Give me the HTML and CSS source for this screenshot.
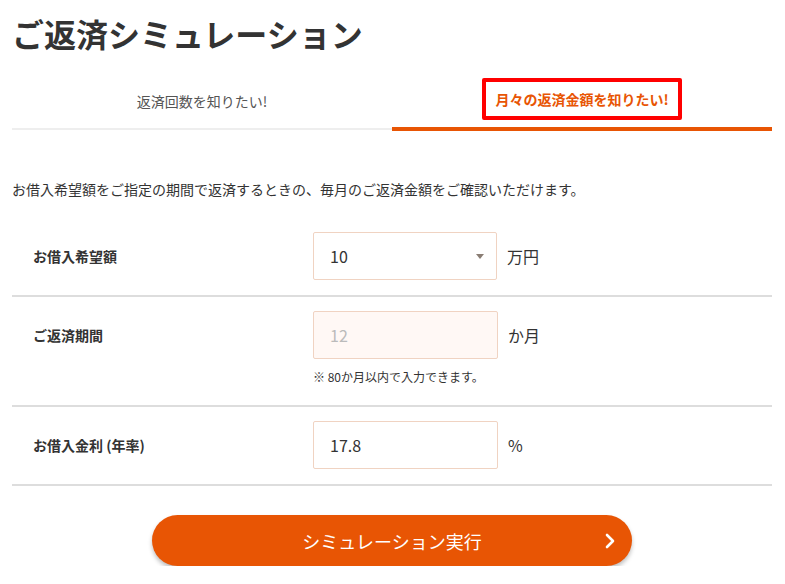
FILE: index.html
```html
<!DOCTYPE html>
<html lang="ja">
<head>
    <meta charset="UTF-8">
    <meta name="viewport" content="width=device-width, initial-scale=1.0">
    <title>ご返済シミュレーション</title>
    <link rel="stylesheet" href="styles.css">
</head>
<body>

    <section class="sim">
        <h1 class="sim-title">ご返済シミュレーション</h1>

        <ul class="tabs">
            <li class="tab">返済回数を知りたい!</li>
            <li class="tab current"><span class="tab-mark">月々の返済金額を知りたい!</span></li>
        </ul>

        <p class="lead">お借入希望額をご指定の期間で返済するときの、毎月のご返済金額をご確認いただけます。</p>

        <div class="rows">
            <div class="row">
                <div class="label">お借入希望額</div>
                <div class="field">
                    <div class="select">
                        <span>10</span>
                    </div>
                    <span class="unit">万円</span>
                </div>
            </div>
            <div class="row">
                <div class="label">ご返済期間</div>
                <div class="field">
                    <div class="input disabled">12</div>
                    <span class="unit">か月</span>
                </div>
                <p class="note">※ 80か月以内で入力できます。</p>
            </div>
            <div class="row">
                <div class="label">お借入金利 (年率)</div>
                <div class="field">
                    <div class="input">17.8</div>
                    <span class="unit">%</span>
                </div>
            </div>
        </div>

        <button class="run">
            シミュレーション実行
            <svg class="run-arrow" width="10" height="16" viewBox="0 0 10 16">
                <path d="M2 2 L8 8 L2 14" fill="none" stroke="#fff" stroke-width="2.6" stroke-linecap="round" stroke-linejoin="round"/>
            </svg>
        </button>
    </section>

</body>
</html>
```

FILE: styles.css
```css
* {
    margin: 0;
    padding: 0;
    list-style: none;
    box-sizing: border-box;
}

body {
    font-family: "Noto Sans CJK JP", "Noto Sans", sans-serif;
    color: #333;
    background: #fff;
}

.sim {
    width: 760px;
    margin: 0 12px;
    padding-top: 13px;
}

.sim-title {
    font-size: 32px;
    line-height: 40px;
    font-weight: bold;
    color: #333;
}

/* タブ */
.tabs {
    display: flex;
    align-items: flex-end;
    margin-top: 17px;
}
.tab {
    flex: 1;
    text-align: center;
    font-size: 14px;
    line-height: 20px;
    color: #555;
    padding-bottom: 17px;
    border-bottom: 2px solid #eee;
    margin-bottom: 1px;
}
.tab.current {
    padding: 8px 0 7px;
    border-bottom: 4px solid #e85504;
    margin-bottom: 0;
    color: #e85504;
    font-weight: bold;
}
.tab-mark {
    display: inline-block;
    width: 200px;
    padding: 7px 0;
    border: 4px solid #f00;
    border-radius: 2px;
}

.lead {
    margin-top: 48px;
    font-size: 14px;
    line-height: 20px;
}

/* 入力行 */
.rows {
    margin-top: 18px;
}
.row {
    display: grid;
    grid-template-columns: 280px 1fr;
    padding: 15px 0 15px 21px;
    border-bottom: 2px solid #ddd;
}
.row + .row {
    padding-top: 14px;
}
.label {
    align-self: center;
    font-size: 14px;
    font-weight: bold;
}
.field {
    display: flex;
    align-items: center;
    gap: 10px;
}
.select,
.input {
    width: 185px;
    height: 48px;
    border: 1px solid #f0d3c2;
    border-radius: 2px;
    padding-left: 16px;
    font-size: 16px;
    line-height: 46px;
    color: #333;
    background: #fff;
}
.select {
    position: relative;
    width: 184px;
}
.select::after {
    content: "";
    position: absolute;
    right: 12px;
    top: 21px;
    border-left: 4px solid transparent;
    border-right: 4px solid transparent;
    border-top: 5px solid #8a7d74;
}
.input.disabled {
    background: #fff8f5;
    color: #bbb;
}
.unit {
    font-size: 16px;
}
.note {
    grid-column: 2;
    margin-top: 9px;
    margin-bottom: 4px;
    font-size: 12px;
    line-height: 18px;
}

/* 実行ボタン */
.run {
    display: flex;
    align-items: center;
    justify-content: center;
    position: relative;
    width: 480px;
    height: 51px;
    margin: 29px auto 0;
    border: none;
    border-radius: 26px;
    background: #e85504;
    color: #fff;
    font-family: inherit;
    font-size: 18px;
    box-shadow: 0 3px 4px rgba(0, 0, 0, 0.25);
}
.run-arrow {
    position: absolute;
    right: 17px;
    top: 18px;
}
```
